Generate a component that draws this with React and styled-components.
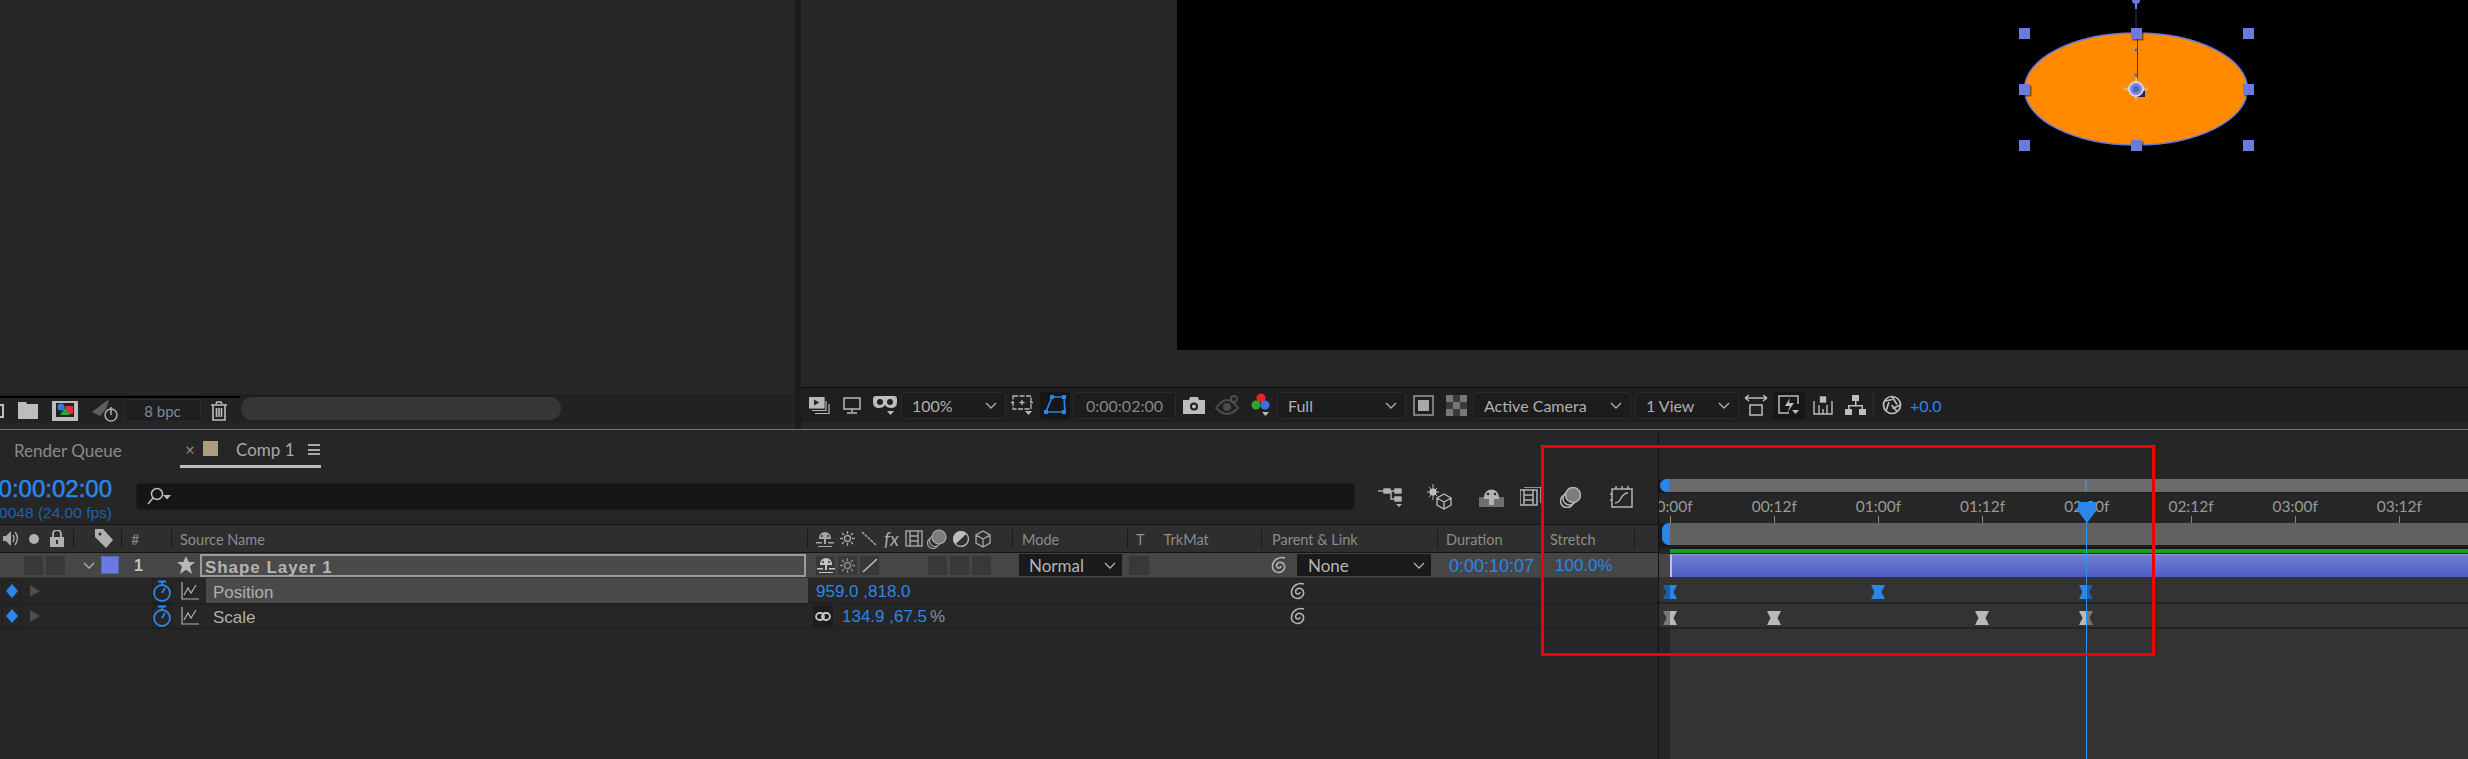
import React from 'react';
import styled, { createGlobalStyle } from 'styled-components';

const BLUE = '#2a86e8';
const COLS = '74px 48px 50px 636px 205px 115px 134px 176px 104px 93px 1fr';

const Global = createGlobalStyle`
    html, body { margin: 0; padding: 0; background: #262626; }
    * { box-sizing: border-box; }
`;

const Page = styled.div`
    position: relative;
    width: 2468px;
    height: 759px;
    overflow: hidden;
    display: flex;
    flex-direction: column;
    background: #262626;
    font-family: Lato, "Noto Sans", sans-serif;
    color: #8f8f8f;
`;

const Annotation = styled.div`
    position: absolute;
    left: 1541px;
    top: 445px;
    width: 614px;
    height: 211px;
    border: 3px solid #f00000;
    pointer-events: none;
    z-index: 5;
`;

/* top half */
const TopArea = styled.div`
    display: flex;
    height: 429px;
`;

const ProjectPanel = styled.div`
    width: 795px;
    display: flex;
    flex-direction: column;
    background: #262626;
`;

const ProjectBody = styled.div`
    height: 396px;
    border-bottom: 1px solid #1c1c1c;
`;

const ProjectFooter = styled.div`
    display: flex;
    height: 27px;
    background: #222;
`;

const FooterTools = styled.div`
    width: 240px;
    flex: none;
    display: flex;
    align-items: center;
    border-top: 2px solid #000;
`;

const FooterRest = styled.div`
    flex: 1;
    padding: 1px 0 2px 1px;
    display: flex;
`;

const Pill = styled.div`
    width: 320px;
    height: 23px;
    border-radius: 12px;
    background: #363636;
`;

const BpcBox = styled.div`
    width: 77px;
    height: 23px;
    margin: 0 10px 0 6px;
    border: 1px solid #2c2c2c;
    border-radius: 3px;
    background: #1f1f1f;
    color: #7f8a99;
    font-size: 15px;
    display: flex;
    align-items: center;
    justify-content: center;
`;

const Gutter = styled.div`
    width: 6px;
    background: #1b1b1b;
`;

const ViewerPanel = styled.div`
    flex: 1;
    display: flex;
    flex-direction: column;
`;

const ViewerBody = styled.div`
    height: 388px;
    display: flex;
    align-items: flex-start;
    border-bottom: 1px solid #0e0e0e;
`;

const ViewerPad = styled.div`
    width: 376px;
    flex: none;
`;

const Canvas = styled.div`
    flex: 1;
    height: 350px;
    background: #000;
`;

const ViewerBar = styled.div`
    height: 34px;
    background: #1f1f1f;
    display: flex;
    align-items: center;
    padding-left: 8px;
`;

const Slot = styled.div`
    flex: none;
    width: ${p => p.$w}px;
    margin-left: ${p => p.$ml || 0}px;
    height: 27px;
    display: flex;
    align-items: center;
    justify-content: center;
    color: #b9b9b9;
    border-radius: 3px;
    background: ${p => (p.$active ? '#161616' : 'transparent')};
`;

const Select = styled.div`
    flex: none;
    width: ${p => p.$w}px;
    margin-left: ${p => p.$ml || 0}px;
    height: 27px;
    padding: 0 8px 0 10px;
    display: flex;
    align-items: center;
    justify-content: space-between;
    background: #1c1c1c;
    border: 1px solid #2b2b2b;
    border-radius: 4px;
    color: #b0b0b0;
    font-size: 16px;
    white-space: nowrap;
`;

const TimeBox = styled(Select)`
    justify-content: center;
    padding: 0;
    color: #858585;
`;

const ExposureValue = styled.span`
    margin-left: 8px;
    color: ${BLUE};
    font-size: 16px;
`;

const BarDivider = styled.span`
    width: 1px;
    height: 26px;
    margin-left: 7px;
    background: #2e2e2e;
`;

const BlueLine = styled.div`
    height: 1px;
    background: #3b82c8;
`;

/* timeline */
const Timeline = styled.div`
    flex: 1;
    display: flex;
`;

const LeftPane = styled.div`
    width: 1658px;
    flex: none;
    display: flex;
    flex-direction: column;
`;

const Tabs = styled.div`
    height: 37px;
    flex: none;
    display: flex;
    align-items: flex-start;
    padding-left: 14px;
    font-size: 17px;
`;

const RenderTab = styled.div`
    width: 166px;
    height: 37px;
    line-height: 41px;
    color: #8a8a8a;
    white-space: nowrap;
`;

const ActiveTab = styled.div`
    width: 141px;
    height: 38px;
    flex: none;
    padding: 4px 0 0 5px;
    display: flex;
    align-items: center;
    color: #a8a8a8;
    border-bottom: 3px solid #bdbdbd;
    white-space: nowrap;
`;

const CloseX = styled.span`
    width: 18px;
    flex: none;
    font-size: 17px;
    color: #8a8a8a;
`;

const TabSwatch = styled.span`
    width: 15px;
    height: 15px;
    flex: none;
    margin: -2px 18px 0 0;
    background: #ad9d7f;
`;

const TabTitle = styled.span`
    width: 55px;
    flex: none;
`;

const TabMenu = styled.span`
    width: 12px;
    height: 11px;
    flex: none;
    margin-left: 17px;
    border-top: 2px solid #a8a8a8;
    border-bottom: 2px solid #a8a8a8;
    background: linear-gradient(#a8a8a8, #a8a8a8) center / 100% 2px no-repeat;
`;

const Controls = styled.div`
    height: 57px;
    flex: none;
    display: flex;
    align-items: flex-start;
`;

const TimeBlock = styled.div`
    width: 112px;
    flex: none;
    overflow: hidden;
    display: flex;
    flex-direction: column;
    align-items: flex-end;
    font-family: "Liberation Sans", Arial, sans-serif;
`;

const TimeCode = styled.div`
    font-size: 24px;
    line-height: 28px;
    margin-top: 8px;
    color: ${BLUE};
    -webkit-text-stroke: 0.5px ${BLUE};
    white-space: nowrap;
`;

const FrameCount = styled.div`
    font-size: 15.5px;
    line-height: 18px;
    margin-top: 1px;
    color: #1c62b0;
    white-space: nowrap;
`;

const Search = styled.div`
    width: 1219px;
    height: 27px;
    margin: 16px 0 0 24px;
    padding-left: 10px;
    display: flex;
    align-items: center;
    background: #151515;
    border-radius: 4px;
    border: 1px solid #1c1c1c;
`;

const ControlIcons = styled.div`
    display: flex;
    align-items: center;
    height: 30px;
    margin-top: 15px;
    color: #b4b4b4;
`;

const ControlIcon = styled.span`
    display: flex;
    margin-left: ${p => p.$ml}px;
`;

const HeaderRow = styled.div`
    height: 29px;
    flex: none;
    display: grid;
    grid-template-columns: ${COLS};
    align-items: center;
    background: #2e2e2e;
    border-top: 1px solid #141414;
    border-bottom: 1px solid #141414;
    font-size: 14.5px;
`;

const HeadCell = styled.div`
    height: 19px;
    display: flex;
    align-items: center;
    padding-left: ${p => p.$pl || 0}px;
    gap: ${p => p.$gap || 0}px;
    border-right: ${p => (p.$open ? 'none' : '1px solid #1a1a1a')};
    color: #a5a5a5;
`;

const HeadText = styled.span`
    color: #8c8c8c;
    margin-left: ${p => p.$ml || 0}px;
    padding-top: 1px;
    white-space: nowrap;
`;

const FxText = styled(HeadText)`
    font-style: italic;
    font-size: 19px;
    color: #a8a8a8;
    padding-top: 0;
`;

const LayerRow = styled.div`
    height: 25px;
    flex: none;
    display: grid;
    grid-template-columns: ${COLS};
    align-items: center;
    background: #464646;
    border-bottom: 1px solid #333;
`;

const PropRow = styled.div`
    height: ${p => p.$h}px;
    flex: none;
    display: grid;
    grid-template-columns: ${COLS};
    align-items: center;
    background: #262626;
    border-bottom: 1px solid #1e1e1e;
`;

const Cell = styled.div`
    height: 100%;
    display: flex;
    align-items: center;
    padding-left: ${p => p.$pl || 0}px;
    gap: ${p => p.$gap || 0}px;
    min-width: 0;
`;

const SpanCell = styled(Cell)`
    grid-column: span ${p => p.$span};
`;

const SwitchBox = styled.span`
    width: ${p => p.$w || 19}px;
    height: 19px;
    flex: none;
    margin-left: ${p => p.$ml || 0}px;
    display: flex;
    align-items: center;
    justify-content: center;
    background: #383838;
    color: #c4c4c4;
`;

const ColorSwatch = styled.span`
    width: 18px;
    height: 18px;
    margin-left: 6px;
    background: #6c7ae0;
    border: 1px solid #5866c0;
`;

const LayerIndex = styled.span`
    margin-left: 12px;
    padding-top: 2px;
    color: #c4c4c4;
    font-family: "Liberation Sans", Arial, sans-serif;
    font-weight: 700;
    font-size: 16px;
`;

const NameField = styled.div`
    width: 606px;
    height: 23px;
    margin-left: 5px;
    padding-left: 3px;
    border: 2px solid #9c9c9c;
    background: #4a4a4a;
    color: #b4b4b4;
    font-family: "Liberation Sans", Arial, sans-serif;
    font-weight: 700;
    font-size: 17px;
    line-height: 24px;
    letter-spacing: 0.95px;
    white-space: nowrap;
`;

const PropName = styled.div`
    flex: 1;
    height: 100%;
    margin-left: ${p => p.$ml}px;
    padding: 4px 0 0 ${p => p.$pl}px;
    display: flex;
    align-items: center;
    background: ${p => (p.$selected ? '#4a4a4a' : 'transparent')};
    color: #b0b0b0;
    font-family: "Liberation Sans", Arial, sans-serif;
    font-size: 17px;
`;

const KeyNav = styled.div`
    display: flex;
    align-items: center;
    width: 152px;
    flex: none;
    padding-left: 2px;
`;

const NavBox = styled.span`
    width: 19px;
    height: 22px;
    display: flex;
    align-items: center;
    justify-content: center;
    border: 1px solid #1e1e1e;
    margin-right: 9px;
`;

const WatchBox = styled.span`
    width: 23px;
    height: 24px;
    display: flex;
    align-items: center;
    justify-content: center;
    border: 1px solid #1e1e1e;
`;

const Value = styled.span`
    color: ${p => (p.$unit ? '#8f8f8f' : BLUE)};
    font-family: "Liberation Sans", Arial, sans-serif;
    font-size: ${p => p.$size || 17}px;
    padding-top: 2px;
    white-space: nowrap;
    margin-left: ${p => p.$ml || 0}px;
`;

const LinkBox = styled.span`
    width: 20px;
    height: 21px;
    margin-left: 5px;
    display: flex;
    align-items: center;
    justify-content: center;
    background: #1c1c1c;
    color: #bdbdbd;
`;

const RowSelect = styled.div`
    width: ${p => p.$w}px;
    height: 22px;
    margin-left: ${p => p.$ml}px;
    padding: 0 6px 0 ${p => p.$pl}px;
    flex: none;
    display: flex;
    align-items: center;
    justify-content: space-between;
    background: #1a1a1a;
    color: #b4b4b4;
    font-size: 17px;
`;

const Whip = styled.span`
    display: flex;
    margin-left: ${p => p.$ml}px;
    color: #b4b4b4;
`;

/* right side */
const RightPane = styled.div`
    position: relative;
    flex: 1;
    display: flex;
    flex-direction: column;
    overflow: hidden;
    border-left: 1px solid #111;
`;

const RightPad = styled.div`
    height: 49px;
    flex: none;
`;

const Navigator = styled.div`
    height: 14px;
    flex: none;
    display: flex;
    padding: 0 0 1px 1px;
    background: #1c1c1c;
`;

const Handle = styled.span`
    width: ${p => p.$w}px;
    flex: none;
    background: ${BLUE};
    border-radius: 7px 0 0 7px;
`;

const NavTrack = styled.div`
    flex: 1;
    background: #6b6b6b;
`;

const Ruler = styled.div`
    height: 30px;
    flex: none;
    display: flex;
    margin-left: -41px;
    background: #262626;
`;

const RulerCell = styled.div`
    width: 104.2px;
    flex: none;
    display: flex;
    flex-direction: column;
    align-items: center;
    color: #9a9a9a;
    font-size: 15.5px;
`;

const RulerLabel = styled.span`
    line-height: 19px;
    margin-top: 4px;
`;

const Tick = styled.span`
    width: 1px;
    height: ${p => (p.$major ? 11 : 8)}px;
    margin-top: auto;
    background: #8a8a8a;
`;

const WorkArea = styled.div`
    height: 25px;
    flex: none;
    display: flex;
    padding-left: 3px;
    background: #1c1c1c;
    border-bottom: 3px solid #1c1c1c;
`;

const WorkTrack = styled.div`
    flex: 1;
    background: #616161;
`;

const GreenBar = styled.div`
    height: 6px;
    flex: none;
    margin-left: 11px;
    background: #0ea51a;
    border-top: 1px solid #111;
    border-bottom: 1px solid #222;
`;

const LayerTrack = styled.div`
    height: 24px;
    flex: none;
    padding-left: 11px;
    background: #464646;
    border-bottom: 1px solid #333;
`;

const LayerBar = styled.div`
    height: 100%;
    background: linear-gradient(#6f7dd4, #4c5dc4);
    border-left: 2px solid #b8c0ee;
    border-top: 1px solid #8f9ae0;
`;

const KeyTrack = styled.div`
    position: relative;
    height: ${p => p.$h}px;
    flex: none;
    background: #333;
    border-bottom: 2px solid #242424;
`;

const EmptyTrack = styled.div`
    flex: 1;
    margin-left: 11px;
    background: #333;
`;

const KeySpot = styled.svg`
    position: absolute;
    left: ${p => p.$x - 1660 - 7}px;
    top: 7px;
`;

const PlayHead = styled.svg`
    position: absolute;
    left: 419px;
    top: 72px;
    z-index: 3;
`;

const PlayLine = styled.div`
    position: absolute;
    left: 427px;
    top: 90px;
    bottom: 0;
    width: 1px;
    background: #3090f0;
    z-index: 3;
`;

const NavMarker = styled.div`
    position: absolute;
    left: 426px;
    top: 50px;
    width: 2px;
    height: 11px;
    background: #5f82a8;
`;

const Chev = () => (
    <svg width="12" height="7" viewBox="0 0 12 7" fill="none" stroke="#b0b0b0" strokeWidth="1.3"><path d="M1 1l5 5 5-5" /></svg>
);

const Spiral = () => (
    <svg width="17" height="18" viewBox="0 0 17 18" fill="none" stroke="currentColor" strokeWidth="1.5">
        <path d="M14 2C8 0 2 4 1.5 10c-.4 5 4.5 7.5 8.5 6 4-1.500 5-7 1.500-9C8 5 4.500 8 6 11c1 2 4 1 4-1" />
    </svg>
);

const Shy = () => (
    <svg width="18" height="18" viewBox="0 0 18 18" fill="currentColor">
        <path d="M3 8a6 6 0 0 1 12 0v1h-5v5H8V9H3z" />
        <path d="M0 12h6v1.500H0zM12 12h6v1.500h-6zM2 16h14v1H2z" />
        <circle cx="6" cy="6" r="1" fill="#333" /><circle cx="12" cy="6" r="1" fill="#333" />
    </svg>
);

const Sun = ({ dim }) => (
    <svg width="15" height="15" viewBox="0 0 15 15" fill="none" stroke="currentColor" strokeWidth="1.400" opacity={dim ? 0.6 : 1}>
        <circle cx="7.500" cy="7.500" r="3" />
        <path d="M7.500 0v3M7.500 12v3M0 7.500h3M12 7.500h3M2 2l2 2M11 11l2 2M2 13l2-2M11 4l2-2" />
    </svg>
);

const Stopwatch = () => (
    <svg width="18" height="22" viewBox="0 0 18 22" fill="none" stroke={BLUE} strokeWidth="1.800">
        <circle cx="9" cy="13" r="8" />
        <path d="M5 1.500h8M9 2v3M9 13l3-5" />
    </svg>
);

const GraphGlyph = () => (
    <svg width="18" height="18" viewBox="0 0 18 18" fill="none" stroke="#b0b0b0" strokeWidth="1.200">
        <path d="M1 0v17h17M3 13l4-7 3 5 5-8" />
    </svg>
);

const Diamond = () => <svg width="12" height="14" viewBox="0 0 12 14"><path d="M6 0l6 7-6 7-6-7z" fill={BLUE} /></svg>;

const ArrowDim = () => <svg width="10" height="12" viewBox="0 0 10 12"><path d="M0 0l10 6-10 6z" fill="#4c4c4c" /></svg>;

// half = which side of the keyframe is dimmed
const Keyframe = ({ x, gray, half }) => {
    const main = gray ? '#b8b8b8' : BLUE;
    const dim = gray ? '#777' : '#1b5fa8';
    return (
        <KeySpot $x={x} width="14" height="14" viewBox="0 0 14 14">
            <path d="M0 0h7v14H0l3.500-7z" fill={half === 'left' ? dim : main} />
            <path d="M14 0H7v14h7l-3.500-7z" fill={half === 'right' ? dim : main} />
        </KeySpot>
    );
};

const handles = [
    [2019, 28], [2131, 28], [2243, 28],
    [2019, 84], [2243, 84],
    [2019, 140], [2131, 140], [2243, 140],
];

// comp drawing, coordinates relative to the black canvas
const CompDrawing = () => (
    <svg width="1291" height="350" viewBox="1177 0 1291 350">
        <ellipse cx="2136" cy="89" rx="111.500" ry="56" fill="#ff8a00" stroke="#6c7ae0" strokeWidth="1.500" />
        <path d="M2136 8v20" stroke="#1c2340" strokeWidth="1.500" />
        <path d="M2137.500 38v40" stroke="#5a3410" strokeWidth="1" />
        <circle cx="2136" cy="0" r="4" fill="#6c7ae0" />
        <rect x="2135" y="4" width="2" height="5" fill="#6c7ae0" />
        <circle cx="2136" cy="50" r="1.500" fill="#5566c4" />
        <circle cx="2136" cy="75" r="1.500" fill="#5566c4" />
        {handles.map(([x, y]) => (
            <g key={`${x}-${y}`}>
                <rect x={x + 1.500} y={y + 1.500} width="11" height="11" fill="#000" opacity="0.45" />
                <rect x={x} y={y} width="11" height="11" fill="#6c7ae0" />
            </g>
        ))}
        <rect x="2137" y="90" width="8" height="7" fill="#22264a" />
        <path d="M2136 76l2 9 11 4-11 4-2 9-2-9-11-4 11-4z" fill="#d6b48e" />
        <circle cx="2136" cy="89" r="7" fill="#7f8ce4" stroke="#dde2f8" strokeWidth="1.500" />
        <circle cx="2136" cy="89" r="3.500" fill="#5566c4" />
    </svg>
);

const rulerLabels = ['00:00f', '00:12f', '01:00f', '01:12f', '02:00f', '02:12f', '03:00f', '03:12f', '04:00f'];

const App = () => {
    return (
        <Page>
            <Global />
            <TopArea>
                <ProjectPanel>
                    <ProjectBody />
                    <ProjectFooter>
                        <FooterTools>
                            <svg width="4" height="14" viewBox="0 0 4 14" fill="none" stroke="#bdbdbd" strokeWidth="2"><path d="M0 1h3v12H0" /></svg>
                            <svg style={{ marginLeft: 14 }} width="20" height="17" viewBox="0 0 20 17" fill="#bdbdbd"><path d="M0 0h8l1 2h11v15H0z" /></svg>
                            <svg style={{ marginLeft: 14 }} width="26" height="20" viewBox="0 0 26 20">
                                <rect width="26" height="20" fill="#bdbdbd" />
                                <rect x="4" y="2" width="18" height="14" fill="#222" />
                                <circle cx="9" cy="6" r="3.500" fill="#2a7fe0" />
                                <rect x="13" y="5" width="8" height="8" fill="#e03030" />
                                <path d="M8 14l5-7 5 7z" fill="#30a040" />
                            </svg>
                            <svg style={{ marginLeft: 14 }} width="26" height="22" viewBox="0 0 26 22" fill="none">
                                <path d="M0 12L13 2l4-2-3 9-6 7z" fill="#5e5e5e" />
                                <circle cx="19" cy="15" r="6" stroke="#b0b0b0" strokeWidth="1.500" />
                                <path d="M19 7v8" stroke="#b0b0b0" strokeWidth="1.500" />
                            </svg>
                            <BpcBox>8 bpc</BpcBox>
                            <svg width="16" height="20" viewBox="0 0 16 20" fill="none" stroke="#bdbdbd" strokeWidth="1.600">
                                <path d="M0 4h16M5 3l1-2h4l1 2M2 4v15h12V4M5.500 7v9M8 7v9M10.500 7v9" />
                            </svg>
                        </FooterTools>
                        <FooterRest><Pill /></FooterRest>
                    </ProjectFooter>
                </ProjectPanel>
                <Gutter />
                <ViewerPanel>
                    <ViewerBody>
                        <ViewerPad />
                        <Canvas><CompDrawing /></Canvas>
                    </ViewerBody>
                    <ViewerBar>
                        <Slot $w={21}>
                            <svg width="21" height="17" viewBox="0 0 21 17" fill="none" stroke="#b9b9b9" strokeWidth="1.200">
                                <rect x="0" y="0" width="15" height="11" fill="#b9b9b9" /><path d="M5 2.500l5 3-5 3z" fill="#222" stroke="none" />
                                <path d="M3 13.500h14V4M6 16.500h14V7" />
                            </svg>
                        </Slot>
                        <Slot $w={18} $ml={13}>
                            <svg width="18" height="17" viewBox="0 0 18 17" fill="none" stroke="#b9b9b9" strokeWidth="1.500">
                                <rect x="1" y="1" width="16" height="11" /><path d="M9 12v3M4 16h10" />
                            </svg>
                        </Slot>
                        <Slot $w={24} $ml={12}>
                            <svg width="24" height="21" viewBox="0 0 24 21" fill="#bdbdbd">
                                <path d="M3 1h18q3 0 3 3v3q0 6-6 6-4 0-6-3-2 3-6 3-6 0-6-6V4q0-3 3-3z" />
                                <circle cx="7" cy="7" r="3" fill="#1f1f1f" /><circle cx="17" cy="7" r="3" fill="#1f1f1f" />
                                <path d="M14 16h7l-3.500 4z" />
                            </svg>
                        </Slot>
                        <Select $w={105} $ml={4}>100% <Chev /></Select>
                        <Slot $w={22} $ml={5}>
                            <svg width="22" height="21" viewBox="0 0 22 21" fill="none" stroke="#b9b9b9" strokeWidth="1.300">
                                <rect x="2" y="1" width="18" height="13" strokeDasharray="5 1.500" />
                                <path d="M11 5v5M8.500 7.500h5M0 7.500h3M19 7.500h3" />
                                <path d="M14 16h7l-3.500 4z" fill="#b9b9b9" stroke="none" />
                            </svg>
                        </Slot>
                        <Slot $w={30} $ml={7} $active>
                            <svg width="22" height="20" viewBox="0 0 22 20" fill="none" stroke={BLUE} strokeWidth="1.700">
                                <path d="M8 2h12l1 15H2z" />
                                <g fill={BLUE} stroke="none"><rect x="6" y="0" width="4" height="4" /><rect x="18" y="0" width="4" height="4" /><rect x="0" y="15" width="4" height="4" /><rect x="18" y="15" width="4" height="4" /></g>
                            </svg>
                        </Slot>
                        <TimeBox $w={103} $ml={3}>0:00:02:00</TimeBox>
                        <Slot $w={22} $ml={7}>
                            <svg width="22" height="17" viewBox="0 0 22 17" fill="#bdbdbd">
                                <path fillRule="evenodd" d="M0 3h6l1-3h8l1 3h6v14H0zM11 5.500a4 4 0 1 0 0 8 4 4 0 0 0 0-8z" />
                                <circle cx="11" cy="9.500" r="2" />
                            </svg>
                        </Slot>
                        <Slot $w={25} $ml={10}>
                            <svg width="25" height="20" viewBox="0 0 25 20" fill="none" stroke="#4d4d4d" strokeWidth="2">
                                <path d="M1 13q6-8 11-8t11 8q-6 6-11 6T1 13z" /><circle cx="12" cy="12" r="3" fill="#4d4d4d" /><circle cx="19" cy="4" r="3" />
                            </svg>
                        </Slot>
                        <Slot $w={20} $ml={11}>
                            <svg width="20" height="24" viewBox="0 0 20 24">
                                <circle cx="10" cy="5" r="4.500" fill="#e8232a" />
                                <circle cx="5" cy="12" r="4.500" fill="#27a82f" />
                                <circle cx="14" cy="12" r="4.500" fill="#3c6fe0" />
                                <path d="M11 19h7l-3.500 4z" fill="#bdbdbd" />
                            </svg>
                        </Slot>
                        <Select $w={129} $ml={6}>Full <Chev /></Select>
                        <Slot $w={21} $ml={7}>
                            <svg width="21" height="21" viewBox="0 0 21 21" fill="none"><rect x="1" y="1" width="19" height="19" stroke="#9a9a9a" strokeWidth="1.500" /><rect x="5" y="5" width="11" height="11" fill="#a8a8a8" /></svg>
                        </Slot>
                        <Slot $w={21} $ml={12}>
                            <svg width="21" height="21" viewBox="0 0 21 21"><rect width="21" height="21" fill="#3a3a3a" /><path d="M0 0h7v7H0zM14 0h7v7h-7zM7 7h7v7H7zM0 14h7v7H0zM14 14h7v7h-7z" fill="#777" /></svg>
                        </Slot>
                        <Select $w={158} $ml={6}>Active Camera <Chev /></Select>
                        <Select $w={104} $ml={4}>1 View <Chev /></Select>
                        <Slot $w={24} $ml={5}>
                            <svg width="24" height="22" viewBox="0 0 24 22" fill="none" stroke="#bdbdbd" strokeWidth="1.500"><path d="M1 4h22M1 4l4-3M1 4l4 3M23 4l-4-3M23 4l-4 3" /><rect x="6" y="11" width="12" height="10" /></svg>
                        </Slot>
                        <Slot $w={32} $ml={5} $active>
                            <svg width="22" height="21" viewBox="0 0 22 21" fill="none" stroke="#bdbdbd" strokeWidth="1.500"><path d="M20 9V1H1v17h10" /><path d="M12 3l-5 8h5l-3 7 7-10h-5z" fill="#bdbdbd" stroke="none" /><path d="M14 15h7l-3.500 4z" fill="#bdbdbd" stroke="none" /></svg>
                        </Slot>
                        <Slot $w={20} $ml={8}>
                            <svg width="20" height="19" viewBox="0 0 20 19" fill="none" stroke="#bdbdbd" strokeWidth="1.400"><path d="M1 5v13h18V5M6 18V9M10 18v-5M14 18V9" /><rect x="7.500" y="1" width="5" height="5" fill="#bdbdbd" /></svg>
                        </Slot>
                        <Slot $w={21} $ml={12}>
                            <svg width="21" height="20" viewBox="0 0 21 20" fill="#bdbdbd"><rect x="7" y="0" width="7" height="6" /><rect x="0" y="14" width="7" height="6" /><rect x="14" y="14" width="7" height="6" /><path d="M10 6h1.500v4H18v4h-1.500v-2.500h-12V14H3v-4h7z" /></svg>
                        </Slot>
                        <BarDivider />
                        <Slot $w={20} $ml={8}>
                            <svg width="20" height="22" viewBox="0 0 20 22" fill="none" stroke="#bdbdbd" strokeWidth="1.700"><circle cx="10" cy="11" r="8.500" /><path d="M10 2.500l5 8M18.500 11l-8 3.500M15.500 18l-6-7M4 17l3-9M2.500 7l8-1.500" /></svg>
                        </Slot>
                        <ExposureValue>+0.0</ExposureValue>
                    </ViewerBar>
                </ViewerPanel>
            </TopArea>
            <BlueLine />
            <Timeline>
                <LeftPane>
                    <Tabs>
                        <RenderTab>Render Queue</RenderTab>
                        <ActiveTab>
                            <CloseX>×</CloseX>
                            <TabSwatch />
                            <TabTitle>Comp 1</TabTitle>
                            <TabMenu />
                        </ActiveTab>
                    </Tabs>
                    <Controls>
                        <TimeBlock>
                            <TimeCode>0:00:02:00</TimeCode>
                            <FrameCount>00048 (24.00 fps)</FrameCount>
                        </TimeBlock>
                        <Search>
                            <svg width="25" height="20" viewBox="0 0 25 20" fill="none" stroke="#bdbdbd" strokeWidth="1.500">
                                <circle cx="10" cy="7" r="5.500" /><path d="M6 11l-5 6" /><path d="M16 8h8l-4 4.500z" fill="#bdbdbd" stroke="none" />
                            </svg>
                        </Search>
                        <ControlIcons>
                            <ControlIcon $ml={23}>
                                <svg width="25" height="24" viewBox="0 0 25 24" fill="none" stroke="#b4b4b4" strokeWidth="1.400">
                                    <path d="M0 6h8" /><rect x="6" y="4" width="6" height="4" fill="#b4b4b4" /><rect x="17" y="4" width="6" height="4" fill="#b4b4b4" /><rect x="17" y="12" width="6" height="4" fill="#b4b4b4" />
                                    <path d="M12 6h5M13 6v8h4" /><path d="M18 19h6l-3 3z" fill="#b4b4b4" stroke="none" />
                                </svg>
                            </ControlIcon>
                            <ControlIcon $ml={24}>
                                <svg width="26" height="26" viewBox="0 0 26 26" fill="none" stroke="#b4b4b4" strokeWidth="1.400">
                                    <path d="M17 10l7 4v7l-7 4-7-4v-7zM10 14l7 4 7-4M17 18v7" />
                                    <circle cx="6" cy="8" r="3.500" fill="#d0d0d0" stroke="none" /><path d="M6 0v16M0 8h12M2 3l8 9M2 13l8-9" strokeWidth="1" />
                                </svg>
                            </ControlIcon>
                            <ControlIcon $ml={26}>
                                <svg width="25" height="19" viewBox="0 0 25 19" fill="#b4b4b4">
                                    <rect x="0" y="9" width="25" height="10" fill="#6f6f6f" />
                                    <path d="M5 9a7.500 7.500 0 0 1 15 0v2h-5v6h-5v-6H5z" /><circle cx="9" cy="6" r="1.300" fill="#262626" /><circle cx="16" cy="6" r="1.300" fill="#262626" />
                                </svg>
                            </ControlIcon>
                            <ControlIcon $ml={16}>
                                <svg width="21" height="21" viewBox="0 0 21 21" fill="none" stroke="#b4b4b4" strokeWidth="1.500">
                                    <rect x="0" y="3" width="17" height="15" /><path d="M4 3v15M13 3v15M4 8h9M4 13h9" /><path d="M4 0h17v16" />
                                </svg>
                            </ControlIcon>
                            <ControlIcon $ml={19}>
                                <svg width="21" height="21" viewBox="0 0 21 21" fill="none" stroke="#b4b4b4" strokeWidth="1.500">
                                    <circle cx="7" cy="14" r="6.500" /><circle cx="9.500" cy="11.500" r="6.500" fill="#262626" /><circle cx="13" cy="8" r="7.500" fill="#7c7c7c" />
                                </svg>
                            </ControlIcon>
                            <ControlIcon $ml={29}>
                                <svg width="23" height="22" viewBox="0 0 23 22" fill="none" stroke="#b4b4b4" strokeWidth="1.500">
                                    <rect x="2" y="3" width="20" height="18" /><path d="M5 17c7 0 5-10 13-10" /><path d="M6 3V0M12 3V0M18 3V0M0 8h2M0 14h2" />
                                </svg>
                            </ControlIcon>
                        </ControlIcons>
                    </Controls>
                    <HeaderRow>
                        <HeadCell $pl={3} $gap={8}>
                            <svg width="18" height="17" viewBox="0 0 18 17" fill="none" stroke="#a8a8a8" strokeWidth="1.400">
                                <path d="M0 6h3l5-5v15l-5-5H0z" fill="#a8a8a8" stroke="none" /><path d="M10 5q2 3 0 7M12 2q5 6 0 13" />
                            </svg>
                            <svg width="10" height="10" viewBox="0 0 10 10"><circle cx="5" cy="5" r="5" fill="#b0b0b0" /></svg>
                            <svg style={{ marginLeft: 3 }} width="14" height="17" viewBox="0 0 14 17" fill="none">
                                <rect y="7" width="14" height="10" fill="#b0b0b0" /><path d="M3 7V4a4 4 0 0 1 8 0v3" stroke="#b0b0b0" strokeWidth="1.800" /><rect x="6" y="10" width="2" height="4" fill="#2e2e2e" />
                            </svg>
                        </HeadCell>
                        <HeadCell $pl={21}>
                            <svg width="18" height="19" viewBox="0 0 18 19"><path d="M0 0h8l10 11-7 8L0 8z" fill="#b0b0b0" /><circle cx="5" cy="5" r="1.500" fill="#2e2e2e" /></svg>
                        </HeadCell>
                        <HeadCell $pl={9}><HeadText>#</HeadText></HeadCell>
                        <HeadCell $pl={8}><HeadText>Source Name</HeadText></HeadCell>
                        <HeadCell $pl={8} $gap={6}>
                            <Shy />
                            <Sun />
                            <svg width="16" height="15" viewBox="0 0 16 15" stroke="#a8a8a8" strokeWidth="1.500" strokeDasharray="3 1"><path d="M1 1l14 13" /></svg>
                            <FxText $ml={1}>fx</FxText>
                            <svg width="18" height="17" viewBox="0 0 18 17" fill="none" stroke="#a8a8a8" strokeWidth="1.400"><rect x="1" y="1" width="16" height="15" /><path d="M5 1v15M13 1v15M5 6h8M5 11h8" /></svg>
                            <svg style={{ marginLeft: -2 }} width="20" height="20" viewBox="0 0 20 20" fill="none" stroke="#a8a8a8" strokeWidth="1.200"><circle cx="6" cy="14" r="5.500" /><circle cx="8" cy="12" r="5.500" fill="#2e2e2e" /><circle cx="12" cy="8" r="7" fill="#7c7c7c" /></svg>
                            <svg width="16" height="16" viewBox="0 0 16 16"><circle cx="8" cy="8" r="8" fill="#bdbdbd" /><path d="M13.600 2.400A8 8 0 0 1 2.400 13.600z" fill="#2e2e2e" /><circle cx="8" cy="8" r="7.300" fill="none" stroke="#bdbdbd" /></svg>
                            <svg style={{ marginLeft: -1 }} width="18" height="18" viewBox="0 0 18 18" fill="none" stroke="#a8a8a8" strokeWidth="1.300"><path d="M9 1l7 4v8l-7 4-7-4V5zM2 5l7 4 7-4M9 9v8" /></svg>
                        </HeadCell>
                        <HeadCell $pl={9}><HeadText>Mode</HeadText></HeadCell>
                        <HeadCell $pl={8}><HeadText>T</HeadText><HeadText $ml={19}>TrkMat</HeadText></HeadCell>
                        <HeadCell $pl={10}><HeadText>Parent &amp; Link</HeadText></HeadCell>
                        <HeadCell $pl={8} $open><HeadText>Duration</HeadText></HeadCell>
                        <HeadCell $pl={8}><HeadText>Stretch</HeadText></HeadCell>
                        <HeadCell $open />
                    </HeaderRow>
                    <LayerRow>
                        <Cell $pl={24} $gap={3}><SwitchBox /><SwitchBox /></Cell>
                        <Cell $pl={9}><Chev /><ColorSwatch /></Cell>
                        <Cell><LayerIndex>1</LayerIndex></Cell>
                        <Cell $pl={5}>
                            <svg width="18" height="18" viewBox="0 0 18 18"><path d="M9 0l2.700 6H18l-5 4.200L15 18l-6-4.200L3 18l2-7.800L0 6h6.300z" fill="#b8b8b8" /></svg>
                            <NameField>Shape Layer 1</NameField>
                        </Cell>
                        <Cell $pl={8} $gap={3}>
                            <SwitchBox><Shy /></SwitchBox>
                            <SwitchBox><Sun dim /></SwitchBox>
                            <SwitchBox>
                                <svg width="16" height="15" viewBox="0 0 16 15" stroke="#c4c4c4" strokeWidth="1.500"><path d="M1 14L15 1" /></svg>
                            </SwitchBox>
                            <SwitchBox $ml={46} />
                            <SwitchBox />
                            <SwitchBox />
                        </Cell>
                        <Cell><RowSelect $w={103} $ml={6} $pl={10}>Normal <Chev /></RowSelect></Cell>
                        <Cell $pl={1}><SwitchBox $w={20} /></Cell>
                        <Cell>
                            <Whip $ml={9}><Spiral /></Whip>
                            <RowSelect $w={134} $ml={9} $pl={11}>None <Chev /></RowSelect>
                        </Cell>
                        <Cell $pl={11}><Value $size={18}>0:00:10:07</Value></Cell>
                        <Cell $pl={13}><Value>100.0%</Value></Cell>
                        <Cell />
                    </LayerRow>
                    <PropRow $h={26}>
                        <SpanCell $span={3}>
                            <KeyNav>
                                <NavBox><Diamond /></NavBox>
                                <ArrowDim />
                            </KeyNav>
                            <WatchBox><Stopwatch /></WatchBox>
                        </SpanCell>
                        <Cell $pl={9}>
                            <GraphGlyph />
                            <PropName $selected $ml={7} $pl={7}>Position</PropName>
                        </Cell>
                        <Cell $pl={8}><Value>959.0 ,818.0</Value></Cell>
                        <Cell /><Cell />
                        <Cell><Whip $ml={28}><Spiral /></Whip></Cell>
                        <Cell /><Cell /><Cell />
                    </PropRow>
                    <PropRow $h={25}>
                        <SpanCell $span={3}>
                            <KeyNav>
                                <NavBox><Diamond /></NavBox>
                                <ArrowDim />
                            </KeyNav>
                            <WatchBox><Stopwatch /></WatchBox>
                        </SpanCell>
                        <Cell $pl={9}>
                            <GraphGlyph />
                            <PropName $ml={7} $pl={7}>Scale</PropName>
                        </Cell>
                        <Cell>
                            <LinkBox>
                                <svg width="16" height="9" viewBox="0 0 16 9" fill="none" stroke="#c4c4c4" strokeWidth="1.800"><rect x="1" y="1" width="8" height="7" rx="3.500" /><rect x="7" y="1" width="8" height="7" rx="3.500" /></svg>
                            </LinkBox>
                            <Value $ml={9}>134.9 ,67.5</Value>
                            <Value $unit $ml={3}>%</Value>
                        </Cell>
                        <Cell /><Cell />
                        <Cell><Whip $ml={28}><Spiral /></Whip></Cell>
                        <Cell /><Cell /><Cell />
                    </PropRow>
                </LeftPane>
                <RightPane>
                    <RightPad />
                    <Navigator>
                        <Handle $w={9} />
                        <NavTrack />
                    </Navigator>
                    <Ruler>
                        {rulerLabels.map((label, i) => (
                            <RulerCell key={label}>
                                <RulerLabel>{label}</RulerLabel>
                                <Tick $major={i % 2 === 0} />
                            </RulerCell>
                        ))}
                    </Ruler>
                    <WorkArea>
                        <Handle $w={8} />
                        <WorkTrack />
                    </WorkArea>
                    <GreenBar />
                    <LayerTrack><LayerBar /></LayerTrack>
                    <KeyTrack $h={26}>
                        <Keyframe x={1671} half="left" />
                        <Keyframe x={1879} />
                        <Keyframe x={2087} half="right" />
                    </KeyTrack>
                    <KeyTrack $h={25}>
                        <Keyframe x={1671} gray half="left" />
                        <Keyframe x={1775} gray />
                        <Keyframe x={1983} gray />
                        <Keyframe x={2087} gray half="right" />
                    </KeyTrack>
                    <EmptyTrack />
                    <NavMarker />
                    <PlayHead width="18" height="21" viewBox="0 0 18 21"><path d="M0 0h18v9L9 21 0 9z" fill={BLUE} /></PlayHead>
                    <PlayLine />
                </RightPane>
            </Timeline>
            <Annotation />
        </Page>
    );
};

export default App;
